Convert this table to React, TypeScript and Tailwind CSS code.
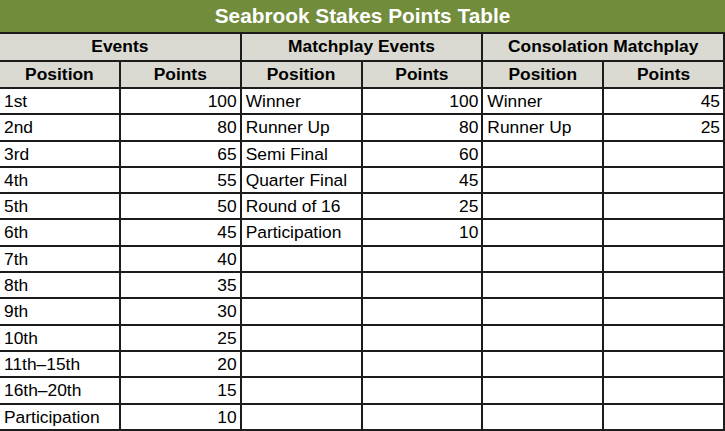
import React from "react";

type Row = [string, string];

const events: Row[] = [
  ["1st", "100"],
  ["2nd", "80"],
  ["3rd", "65"],
  ["4th", "55"],
  ["5th", "50"],
  ["6th", "45"],
  ["7th", "40"],
  ["8th", "35"],
  ["9th", "30"],
  ["10th", "25"],
  ["11th\u201315th", "20"],
  ["16th\u201320th", "15"],
  ["Participation", "10"],
];

const matchplay: Row[] = [
  ["Winner", "100"],
  ["Runner Up", "80"],
  ["Semi Final", "60"],
  ["Quarter Final", "45"],
  ["Round of 16", "25"],
  ["Participation", "10"],
];

const consolation: Row[] = [
  ["Winner", "45"],
  ["Runner Up", "25"],
];

function Group({ title }: { title: string }) {
  return (
    <div className="col-span-2 h-[26px] bg-[#dadad2] flex items-center justify-center font-bold">
      {title}
    </div>
  );
}

function SubHead({ label }: { label: string }) {
  return (
    <div className="h-[25px] bg-[#dadad2] flex items-center justify-center font-bold">
      {label}
    </div>
  );
}

export default function App() {
  const rows = Array.from({ length: 13 }, (_, i) => i);
  return (
    <div
      className="w-[725px] h-[431px] overflow-hidden bg-white text-[17.4px] text-black leading-none"
      style={{ fontFamily: '"Liberation Sans", Arial, sans-serif' }}
    >
      <div className="h-[34px] bg-[#718c3b] border-b-2 border-[#1c1c1c] flex items-center justify-center text-white font-bold text-[20.8px]">
        Seabrook Stakes Points Table
      </div>
      <div className="grid grid-cols-6 gap-[2px] bg-[#1c1c1c] pr-[2px] pb-[2px]">
        <Group title="Events" />
        <Group title="Matchplay Events" />
        <Group title="Consolation Matchplay" />
        {["Position", "Points", "Position", "Points", "Position", "Points"].map((l, i) => (
          <SubHead key={i} label={l} />
        ))}
        {rows.map((i) => {
          const cells: Row[] = [
            events[i] ?? ["", ""],
            matchplay[i] ?? ["", ""],
            consolation[i] ?? ["", ""],
          ];
          return cells.map(([pos, pts], g) => (
            <React.Fragment key={`${i}-${g}`}>
              <div className="h-[24.3px] bg-white flex items-center pl-[4px] pt-[1px] whitespace-nowrap">
                {pos}
              </div>
              <div className="h-[24.3px] bg-white flex items-center justify-end pr-[3px] pt-[1px]">
                {pts}
              </div>
            </React.Fragment>
          ));
        })}
      </div>
    </div>
  );
}
